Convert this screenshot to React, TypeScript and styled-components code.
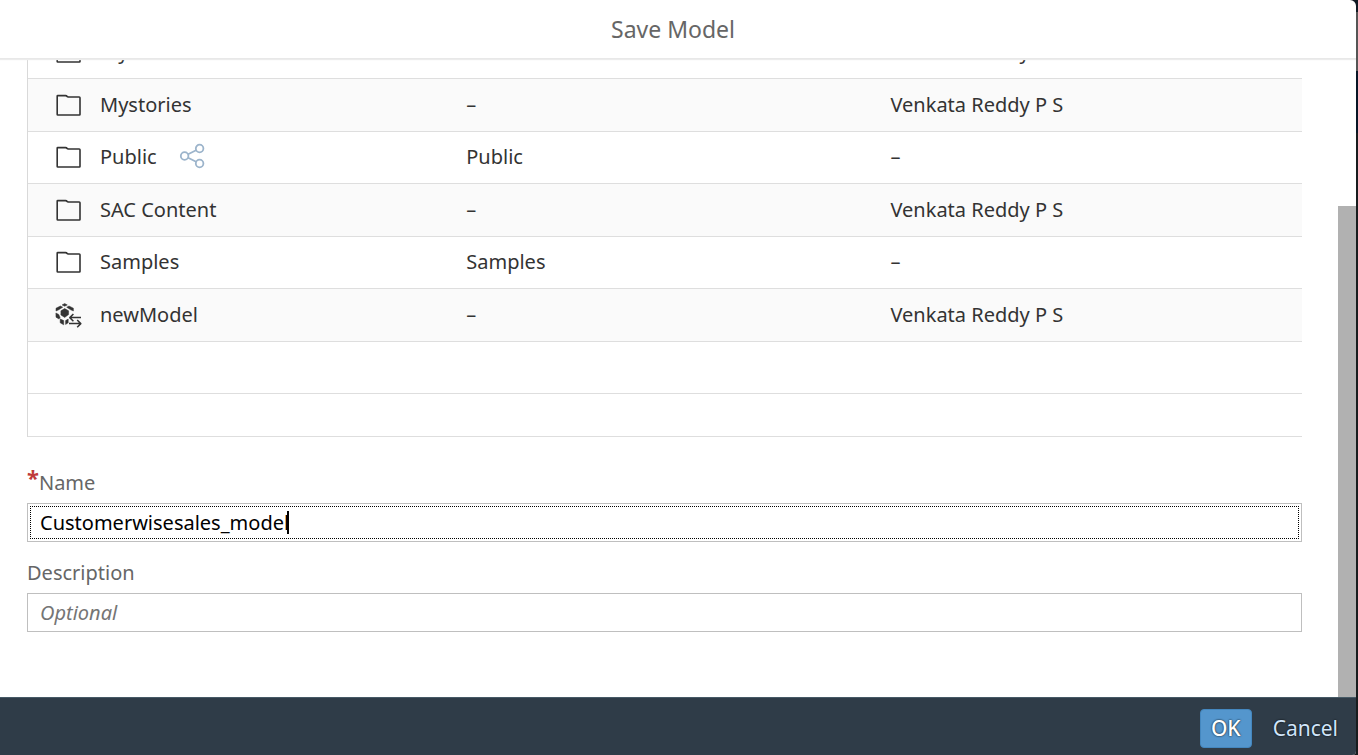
import React from 'react';
import styled, { createGlobalStyle } from 'styled-components';

const GlobalStyle = createGlobalStyle`
  * { box-sizing: border-box; }
  body {
    margin: 0;
    font-family: 'Noto Sans', 'Open Sans', sans-serif;
    font-size: 20px;
    line-height: 24px;
    color: #333;
  }
`;

const Backdrop = styled.div`
  height: 100vh;
  padding-right: 2px;
  background: linear-gradient(#0f1923 12px, #555 12px, #555 71px, #081626 71px, #081626 133px, #181c1e 133px);
`;

const Dialog = styled.form`
  display: flex;
  flex-direction: column;
  height: 100%;
  background: #fff;
  border-radius: 0 6px 4px 0;
  overflow: hidden;
`;

const Header = styled.header`
  flex: none;
  padding: 17px 10px 17px 0;
  border-bottom: 1px solid #e8e8e8;
  box-shadow: 0 1px 1px #ececec;
  text-align: center;
  z-index: 1;
`;

const Title = styled.h1`
  margin: 0;
  font-size: 23px;
  line-height: 24px;
  font-weight: 400;
  color: #666;
`;

const Body = styled.div`
  flex: 1;
  min-height: 0;
  display: flex;
`;

const Content = styled.main`
  flex: 1;
  min-width: 0;
  display: flex;
  flex-direction: column;
  justify-content: flex-end;
  overflow: hidden;
  padding: 0 36px 65px 27px;
`;

const ScrollTrack = styled.div`
  flex: none;
  width: 18px;
  display: flex;
  align-items: flex-end;
`;

const ScrollThumb = styled.div`
  width: 100%;
  height: 77%;
  background: #b1b1b1;
`;

const FileTable = styled.table`
  flex: none;
  width: 100%;
  table-layout: fixed;
  border-spacing: 0;
  border-left: 1px solid #d9d9d9;
  margin-bottom: 34px;
`;

const FileRow = styled.tr<{ $last?: boolean }>`
  height: ${p => (p.$last ? 43 : 52)}px;
  &:nth-child(even) { height: 53px; }
  &:nth-child(even) > td { background: #fafafa; }
  &:nth-child(n + 7) { height: ${p => (p.$last ? 43 : 52)}px; }
  &:nth-child(n + 7) > td { background: #fff; }
`;

const Cell = styled.td<{ $width?: string }>`
  width: ${p => p.$width ?? 'auto'};
  padding: 0 0 1px;
  border-bottom: 1px solid #dedede;
  vertical-align: middle;
  white-space: nowrap;
`;

const FileName = styled.div`
  display: flex;
  align-items: center;
  height: 24px;
  padding-left: 27px;
`;

const TypeIcon = styled.svg`
  flex: none;
  width: 28px;
  height: 26px;
  margin-right: 17px;
`;

const ShareIcon = styled.svg`
  width: 26px;
  height: 26px;
  margin: 0 0 3px 22px;
`;

const Field = styled.div`
  flex: none;
  display: flex;
  flex-direction: column;
  gap: 8px;
  & + & { margin-top: 19px; }
`;

const Label = styled.label`
  color: #666;
`;

const Required = styled.span`
  color: #bf3a3a;
  font-size: 22px;
  font-weight: 700;
  line-height: 0;
  vertical-align: 4px;
`;

const InputBox = styled.div<{ $focused?: boolean }>`
  display: flex;
  align-items: center;
  height: 39px;
  padding-left: 12px;
  border: 1px solid #bfbfbf;
  outline: ${p => (p.$focused ? '1px dotted #000' : 'none')};
  outline-offset: -4px;
`;

const TextInput = styled.input<{ $fit?: boolean }>`
  ${p => (p.$fit ? 'field-sizing: content;' : 'flex: 1;')}
  padding: 0;
  border: 0;
  outline: 0;
  background: none;
  color: #000;
  font: inherit;
  caret-color: transparent;
  &::placeholder { color: #757575; font-style: italic; opacity: 1; }
`;

const Caret = styled.span`
  width: 2px;
  height: 23px;
  margin-left: -2px;
  background: #000;
`;

const Footer = styled.footer`
  flex: none;
  display: flex;
  justify-content: flex-end;
  align-items: center;
  gap: 10px;
  height: 58px;
  padding: 3px 7px 0 0;
  border-top: 1px solid #465a66;
  background: #2f3c48;
`;

const Button = styled.button<{ $primary?: boolean }>`
  height: 39px;
  padding: 0 10px 1px;
  border: 1px solid ${p => (p.$primary ? '#4487bf' : 'transparent')};
  border-radius: 4px;
  background: ${p => (p.$primary ? '#5496cd' : 'transparent')};
  color: ${p => (p.$primary ? '#fff' : '#d0e5fa')};
  font: inherit;
  font-size: 21px;
  font-weight: ${p => (p.$primary ? 500 : 400)};
  text-shadow: 0 0 2px #000;
`;

const Folder = () => (
  <TypeIcon viewBox="0 0 28 26" fill="none" stroke="#333" strokeWidth="1.6" strokeLinejoin="round" aria-hidden="true">
    <path d="M2.2 4.1Q2.2 3.6 2.8 3.6H10.5Q11.6 3.6 12.2 4.6L13.2 5H24.2Q25 5 25 5.8V22.4Q25 23 24.4 23H2.8Q2.2 23 2.2 22.4Z" />
  </TypeIcon>
);

const Model = () => (
  <TypeIcon viewBox="0 0 28 26" fill="#333" stroke="#333" strokeWidth=".5" strokeLinejoin="round" aria-hidden="true">
    <path d="M7.1 2.9L9.7 1.6L12.3 2.9L9.7 4.2Z" />
    <path d="M1 6.2L5.4 4L7.7 5.2L3.7 7.8L1 9Z" />
    <path d="M18.4 6.2L14 4L11.7 5.2L15.7 7.8L18.4 9Z" />
    <path d="M9.7 6.6L13.6 8.8V12.6L9.7 15.4L5.9 13V8.8Z" />
    <path d="M.9 11L3.7 12.4L5.1 15.4L4 17L1 15.2Z" />
    <path d="M5.2 16.9L8.7 18.6V22.8L5.2 20.8Z" />
    <path d="M10.6 18.6L13.2 17V20.8L10.6 22.4Z" />
    <g fill="none" strokeWidth="1.5">
      <path d="M26 15.6H14.8M18.4 12L14.8 15.6L18.4 19.2" />
      <path d="M14 21.6H25.8M22.2 18L25.8 21.6L22.2 25.2" />
    </g>
  </TypeIcon>
);

const Share = () => (
  <ShareIcon viewBox="0 0 26 26" fill="none" stroke="#9cb4cb" strokeWidth="1.8" role="img" aria-label="Shared">
    <circle cx="5.6" cy="13" r="3.8" />
    <circle cx="20.6" cy="5.5" r="3.8" />
    <circle cx="20.6" cy="20.5" r="3.8" />
    <path d="M9.1 11.3L17.1 7.3M9.1 14.8L17.1 18.8" />
  </ShareIcon>
);

type File = { name: string; description: string; owner: string; model?: boolean; shared?: boolean };

const files: File[] = [
  { name: 'My', description: '–', owner: 'Venkata Reddy P S' },
  { name: 'Mystories', description: '–', owner: 'Venkata Reddy P S' },
  { name: 'Public', description: 'Public', owner: '–', shared: true },
  { name: 'SAC Content', description: '–', owner: 'Venkata Reddy P S' },
  { name: 'Samples', description: 'Samples', owner: '–' },
  { name: 'newModel', description: '–', owner: 'Venkata Reddy P S', model: true },
];

export default function App() {
  const [name, setName] = React.useState('Customerwisesales_model');
  return (
    <Backdrop>
      <GlobalStyle />
      <Dialog onSubmit={e => e.preventDefault()}>
        <Header>
          <Title>Save Model</Title>
        </Header>
        <Body>
          <Content>
            <FileTable>
              <tbody>
                {files.map(f => (
                  <FileRow key={f.name}>
                    <Cell $width="34.4%">
                      <FileName>
                        {f.model ? <Model /> : <Folder />}
                        {f.name}
                        {f.shared && <Share />}
                      </FileName>
                    </Cell>
                    <Cell $width="33.3%">{f.description}</Cell>
                    <Cell>{f.owner}</Cell>
                  </FileRow>
                ))}
                <FileRow><Cell colSpan={3} /></FileRow>
                <FileRow $last><Cell colSpan={3} /></FileRow>
              </tbody>
            </FileTable>
            <Field>
              <Label htmlFor="name"><Required>*</Required>Name</Label>
              <InputBox $focused>
                <TextInput id="name" $fit required value={name} onChange={e => setName(e.target.value)} />
                <Caret />
              </InputBox>
            </Field>
            <Field>
              <Label htmlFor="description">Description</Label>
              <InputBox>
                <TextInput id="description" placeholder="Optional" />
              </InputBox>
            </Field>
          </Content>
          <ScrollTrack><ScrollThumb /></ScrollTrack>
        </Body>
        <Footer>
          <Button type="submit" $primary>OK</Button>
          <Button type="button">Cancel</Button>
        </Footer>
      </Dialog>
    </Backdrop>
  );
}
